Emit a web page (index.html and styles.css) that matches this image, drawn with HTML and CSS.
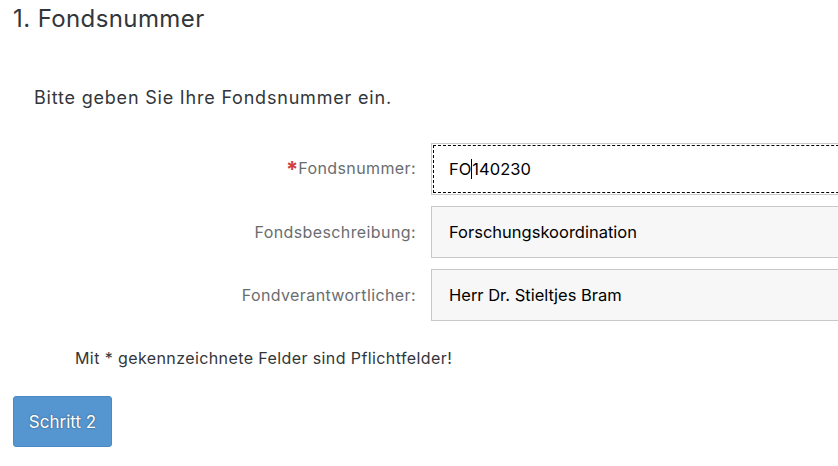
FILE: index.html
```html
<!DOCTYPE html>
<html lang="de">
<head>
<meta charset="utf-8">
<title>Fondsnummer</title>
<link rel="stylesheet" href="styles.css">
</head>
<body>
<div class="page">
  <h1 class="title">1. Fondsnummer</h1>
  <p class="intro">Bitte geben Sie Ihre Fondsnummer ein.</p>
  <div class="form">
    <div class="row">
      <label class="label"><span class="req">*</span>Fondsnummer:</label>
      <div class="field focused"><span class="val">FO</span><span class="caret"></span><span class="val">140230</span></div>
    </div>
    <div class="row">
      <label class="label">Fondsbeschreibung:</label>
      <div class="field readonly"><span class="val">Forschungskoordination</span></div>
    </div>
    <div class="row">
      <label class="label">Fondverantwortlicher:</label>
      <div class="field readonly"><span class="val">Herr Dr. Stieltjes Bram</span></div>
    </div>
  </div>
  <p class="note">Mit * gekennzeichnete Felder sind Pflichtfelder!</p>
  <button class="btn" type="button">Schritt 2</button>
</div>
</body>
</html>
```
FILE: styles.css
```css
html, body {
  margin: 0;
  padding: 0;
  background: #ffffff;
  overflow: hidden;
}
body {
  font-family: Inter, "Liberation Sans", Arial, sans-serif;
  color: #32363a;
}
.page {
  padding: 0 0 0 13px;
  width: 838px;
  box-sizing: border-box;
}
.title {
  margin: 0;
  padding-top: 4px;
  font-size: 24px;
  font-weight: 400;
  letter-spacing: 0.4px;
  line-height: 30px;
  color: #32363a;
}
.intro {
  margin: 52px 0 0 21px;
  font-size: 18px;
  letter-spacing: 0.8px;
  line-height: 24px;
  color: #32363a;
}
.form {
  margin-top: 33px;
  display: flex;
  flex-direction: column;
  gap: 11px;
}
.row {
  display: flex;
  align-items: center;
}
.label {
  width: 418px;
  flex-shrink: 0;
  text-align: right;
  font-size: 16px;
  letter-spacing: 0.4px;
  color: #6a6d70;
  padding-right: 15px;
  box-sizing: border-box;
}
.req {
  color: #d0403f;
  font-weight: 700;
  font-size: 22px;
  vertical-align: -3px;
  letter-spacing: 0;
}
.field {
  width: 440px;
  height: 52px;
  box-sizing: border-box;
  border: 1px solid #c8c8c8;
  display: flex;
  align-items: center;
  padding-left: 17px;
  font-size: 16.5px;
  color: #000000;
  flex-shrink: 0;
}
.field.readonly {
  background: #f7f7f7;
}
.field.focused {
  background: #ffffff;
  outline: 1px dashed #000000;
  outline-offset: -3px;
}
.caret {
  display: inline-block;
  width: 1px;
  height: 20px;
  background: #000;
}
.note {
  margin: 26px 0 0 62px;
  font-size: 16px;
  letter-spacing: 0.4px;
  line-height: 22px;
  color: #32363a;
}
.btn {
  margin-top: 27px;
  width: 99px;
  height: 51px;
  background: #5596d0;
  border: 1px solid #4a89c2;
  border-radius: 3px;
  color: #ffffff;
  font-family: Inter, "Liberation Sans", Arial, sans-serif;
  font-size: 17px;
  text-shadow: 0 0 2px rgba(0,0,0,0.5);
  padding: 0;
}
```
